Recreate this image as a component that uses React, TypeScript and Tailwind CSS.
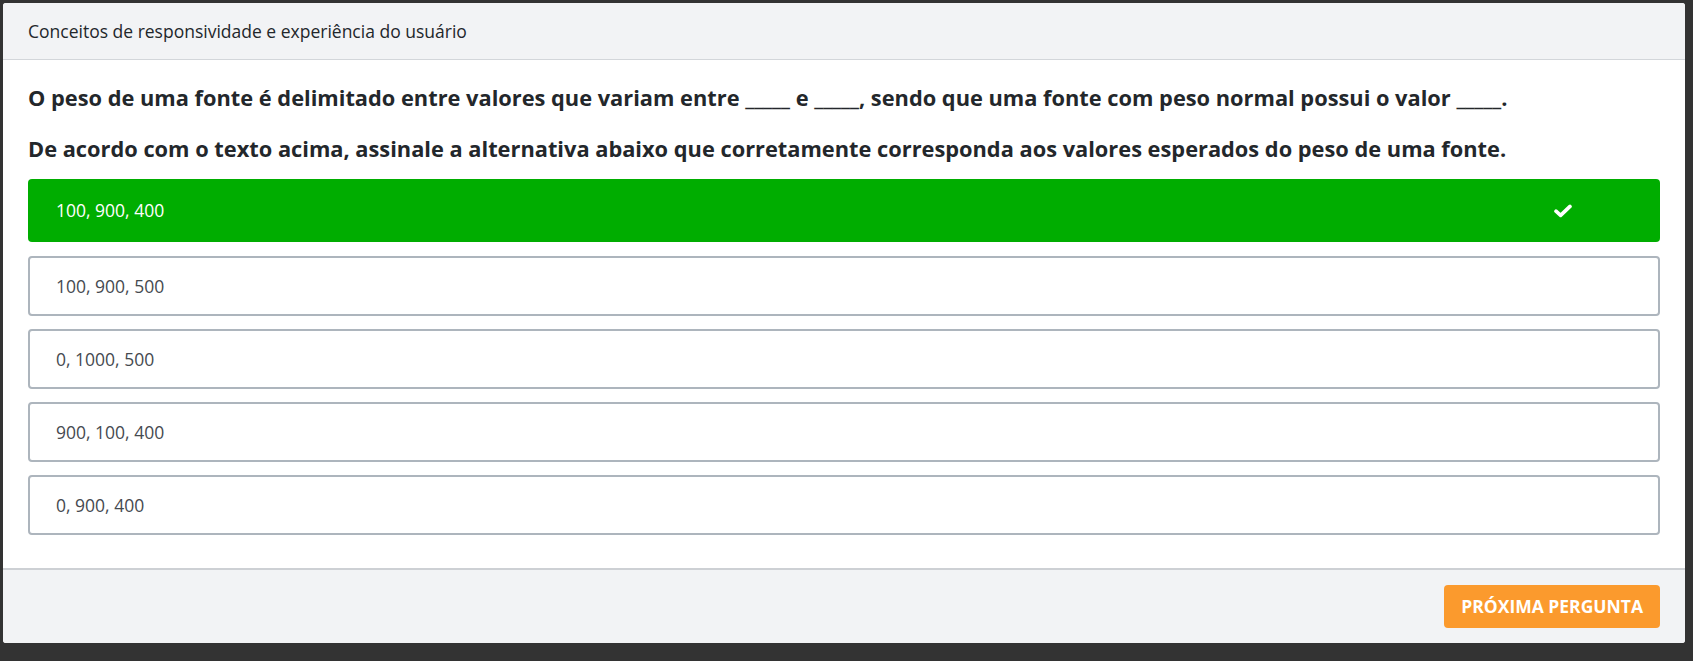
import { useState } from "react";

type Option = { id: number; label: string };

const options: Option[] = [
  { id: 1, label: "100, 900, 400" },
  { id: 2, label: "100, 900, 500" },
  { id: 3, label: "0, 1000, 500" },
  { id: 4, label: "900, 100, 400" },
  { id: 5, label: "0, 900, 400" },
];

function CheckIcon() {
  return (
    <svg viewBox="0 0 18 14" className="h-[14px] w-[18px]" fill="none">
      <path
        d="M2 7.2 L6.6 11.4 L16 2.4"
        stroke="white"
        strokeWidth="3.6"
        strokeLinecap="round"
        strokeLinejoin="round"
      />
    </svg>
  );
}

function OptionRow({
  option,
  selected,
  onSelect,
}: {
  option: Option;
  selected: boolean;
  onSelect: () => void;
}) {
  if (selected) {
    return (
      <button
        onClick={onSelect}
        className="flex h-[63px] w-full items-center rounded-[4px] bg-[#00ad00] pl-[28px] pr-[88px] text-left text-[17.5px] text-white"
      >
        <span>{option.label}</span>
        <span className="ml-auto">
          <CheckIcon />
        </span>
      </button>
    );
  }
  return (
    <button
      onClick={onSelect}
      className="flex h-[60px] w-full items-center rounded-[4px] border-2 border-[#adb5bd] bg-white pl-[26px] text-left text-[17.5px] text-[#454a50]"
    >
      {option.label}
    </button>
  );
}

export default function App() {
  const [selected, setSelected] = useState(1);

  return (
    <div
      className="flex h-[661px] w-full bg-[#333333] pb-[18px] pl-[3px] pr-[8px] pt-[3px]"
      style={{ fontFamily: '"Open Sans", "Noto Sans", sans-serif' }}
    >
      <div className="flex flex-1 flex-col overflow-hidden rounded-[3px] bg-white">
        {/* Header */}
        <div className="flex h-[57px] items-center border-b border-[#d3d6da] bg-[#f2f3f5] px-[25px] text-[17.5px] text-[#23272b]">
          Conceitos de responsividade e experiência do usuário
        </div>

        {/* Question */}
        <div className="flex-1 px-[25px] pt-[23px]">
          <p className="text-[21.8px] font-bold leading-[30px] text-[#23272b]">
            O peso de uma fonte é delimitado entre valores que variam entre _____ e _____, sendo que uma fonte com peso normal possui o valor _____.
          </p>
          <p className="mt-[21px] text-[21.8px] font-bold leading-[30px] text-[#23272b]">
            De acordo com o texto acima, assinale a alternativa abaixo que corretamente corresponda aos valores esperados do peso de uma fonte.
          </p>
          <div className="mt-[15px] flex flex-col">
            {options.map((opt, i) => (
              <div
                key={opt.id}
                className={i === 0 ? "" : i === 1 ? "mt-[14px]" : "mt-[13px]"}
              >
                <OptionRow
                  option={opt}
                  selected={selected === opt.id}
                  onSelect={() => setSelected(opt.id)}
                />
              </div>
            ))}
          </div>
        </div>

        {/* Footer */}
        <div className="flex h-[75px] items-center justify-end border-t-2 border-[#cdd0d4] bg-[#f2f3f5] px-[25px]">
          <button className="h-[43px] rounded-[4px] bg-[#fb9a2d] px-[17px] text-[17.5px] font-bold text-white">
            PRÓXIMA PERGUNTA
          </button>
        </div>
      </div>
    </div>
  );
}
